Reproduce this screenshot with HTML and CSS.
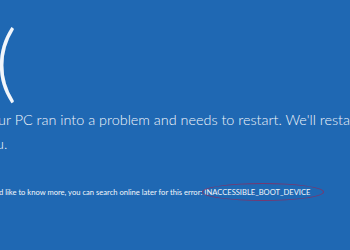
FILE: index.html
```html
<!DOCTYPE html>
<html lang="en">
<head>
    <meta charset="UTF-8">
    <title>Stop code</title>
    <link rel="stylesheet" href="styles.css">
</head>
<body>
    <div class="screen">
        <div class="face">:(</div>
        <p class="message">Your PC ran into a problem and needs to restart. We'll restart for you.</p>
        <p class="info">If you'd like to know more, you can search online later for this error: <span class="code">INACCESSIBLE_BOOT_DEVICE<span class="circle"></span></span></p>
    </div>
</body>
</html>
```

FILE: styles.css
```css
html, body {
    margin: 0;
    padding: 0;
    height: 100%;
    overflow: hidden;
}

body {
    background-color: #1f68b3;
    color: #f2f6fb;
    font-family: 'Lato', sans-serif;
}

.screen {
    width: 350px;
}

.face {
    font-size: 84px;
    font-weight: 300;
    line-height: 1;
    margin: 18px 0 0 -25px;
    height: 84px;
    white-space: nowrap;
}

.message {
    font-size: 14.4px;
    font-weight: 300;
    line-height: 24px;
    margin: 6px 0 0 -19px;
    text-indent: 2px;
    width: 425px;
}

.info {
    font-size: 7.6px;
    margin: 31px 0 0 -21px;
    white-space: nowrap;
}

.code {
    position: relative;
}

.circle {
    position: absolute;
    left: -2px;
    right: -14px;
    top: -4px;
    bottom: -4px;
    border: 1px solid rgba(150, 40, 90, 0.75);
    border-radius: 50%;
}
```
